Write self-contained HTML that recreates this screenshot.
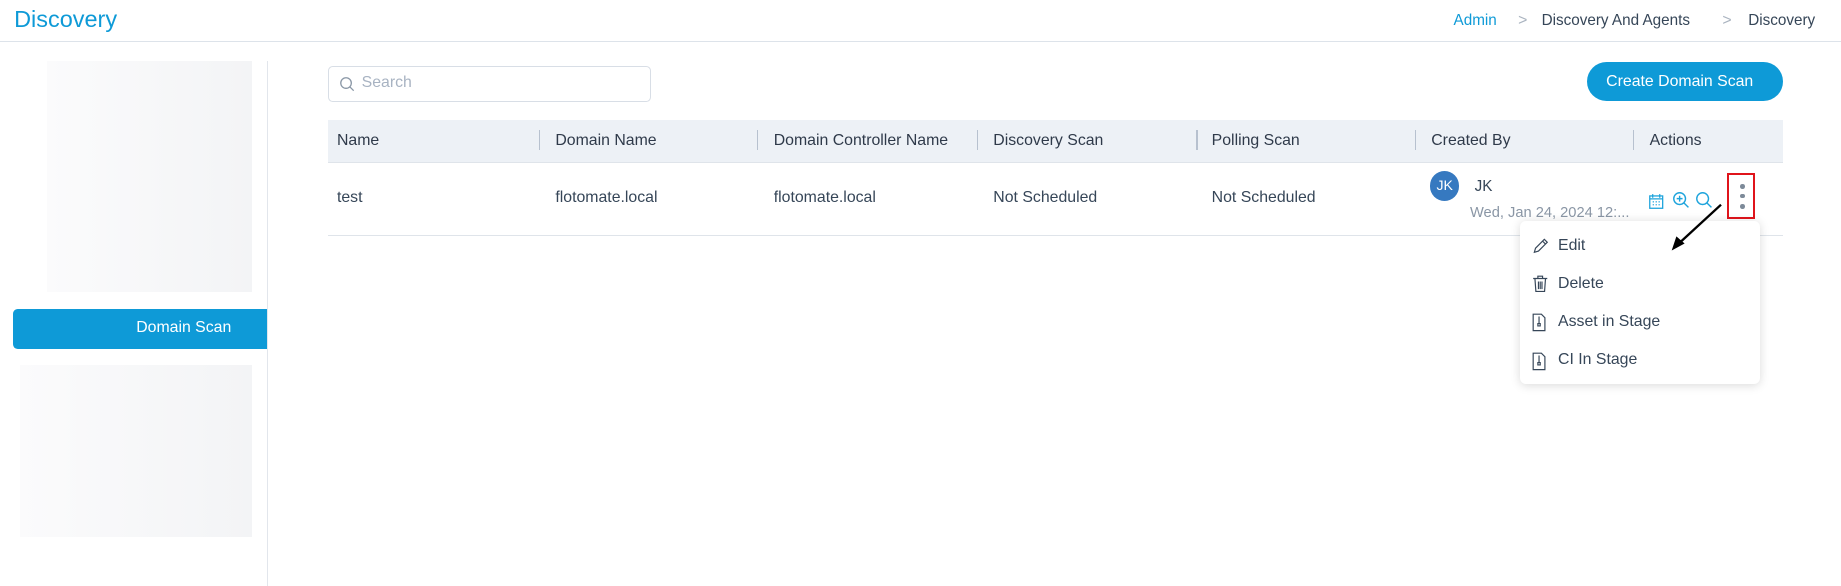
<!DOCTYPE html>
<html><head><meta charset="utf-8"><style>
html{zoom:1.17411}
body{margin:0;width:1568px;height:499px;overflow:hidden;background:#fff;font-family:"Liberation Sans",sans-serif;color:#364658;position:relative;font-size:13.5px}
.a{position:absolute;white-space:nowrap}
.blue{color:#0e9ad7}
.th{position:absolute;top:112px;font-size:13.5px;color:#2f3a4a}
.sep{position:absolute;top:111px;width:1px;height:17px;background:#b7c1cf}
.td{position:absolute;top:161px;font-size:13.5px;color:#364658}
.mi{position:absolute;left:1327px;font-size:13.5px;color:#364658}
</style></head><body>
<div class="a blue" style="left:12px;top:5px;font-size:20px">Discovery</div>
<div class="a" style="left:0;top:35px;width:1568px;height:1px;background:#dde3ea"></div>
<div class="a blue" style="left:1238px;top:10px;font-size:13px">Admin</div>
<div class="a" style="left:1293px;top:10px;color:#aab4c0">&gt;</div>
<div class="a" style="left:1313px;top:10px;font-size:13px">Discovery And Agents</div>
<div class="a" style="left:1467px;top:10px;color:#aab4c0">&gt;</div>
<div class="a" style="left:1489px;top:10px;font-size:13px">Discovery</div>

<div class="a" style="left:40px;top:52px;width:175px;height:197px;background:linear-gradient(90deg,#fbfbfc,#f3f4f6)"></div>
<div class="a" style="left:11px;top:263px;width:216px;height:34px;background:#0e9ad7;border-radius:4px 0 0 4px"></div>
<div class="a" style="left:116px;top:272px;color:#fff">Domain Scan</div>
<div class="a" style="left:17px;top:311px;width:198px;height:146px;background:linear-gradient(90deg,#fbfbfc,#f3f4f6)"></div>
<div class="a" style="left:227px;top:52px;width:1px;height:447px;background:#e2e6ec"></div>

<div class="a" style="left:279px;top:56px;width:274px;height:29px;border:1px solid #d8dee6;border-radius:4px"></div>
<svg class="a" style="left:289px;top:65px" width="14" height="14" viewBox="0 0 14 14"><circle cx="6" cy="6" r="4.5" fill="none" stroke="#8a97a6" stroke-width="1.1"/><path d="M9.3 9.3L12.5 12.5" stroke="#8a97a6" stroke-width="1.1"/></svg>
<div class="a" style="left:308px;top:63px;color:#a8b3c2">Search</div>

<div class="a" style="left:1352px;top:53px;width:167px;height:33px;background:#0e9ad7;border-radius:17px"></div>
<div class="a" style="left:1368px;top:62px;color:#fff;font-size:13.5px">Create Domain Scan</div>

<div class="a" style="left:279px;top:102px;width:1240px;height:36px;background:#edf1f6;border-bottom:1px solid #dfe4ea"></div>
<div class="th" style="left:287px">Name</div>
<div class="sep" style="left:459px"></div><div class="th" style="left:473px">Domain Name</div>
<div class="sep" style="left:645px"></div><div class="th" style="left:659px">Domain Controller Name</div>
<div class="sep" style="left:832px"></div><div class="th" style="left:846px">Discovery Scan</div>
<div class="sep" style="left:1019px"></div><div class="th" style="left:1032px">Polling Scan</div>
<div class="sep" style="left:1205px"></div><div class="th" style="left:1219px">Created By</div>
<div class="sep" style="left:1391px"></div><div class="th" style="left:1405px">Actions</div>

<div class="td" style="left:287px">test</div>
<div class="td" style="left:473px">flotomate.local</div>
<div class="td" style="left:659px">flotomate.local</div>
<div class="td" style="left:846px">Not Scheduled</div>
<div class="td" style="left:1032px">Not Scheduled</div>
<div class="a" style="left:1218px;top:146px;width:25px;height:25px;border-radius:50%;background:#3679c0;color:#fff;font-size:12px;text-align:center;line-height:25px">JK</div>
<div class="a" style="left:1256px;top:152px;font-size:13px">JK</div>
<div class="a" style="left:1252px;top:175px;font-size:12.5px;color:#8a96a5">Wed, Jan 24, 2024 12:...</div>
<div class="a" style="left:279px;top:200px;width:1240px;height:1px;background:#dfe4ea"></div>

<svg class="a" style="left:1404px;top:164px" width="14" height="14" viewBox="0 0 14 14" fill="none" stroke="#1ea4dc" stroke-width="1.1"><rect x="1.5" y="2.5" width="11" height="10.5"/><path d="M1.5 5h11M4 1v3M10 1v3M4 7.5h1M6.5 7.5h1M9 7.5h1M4 10h1M6.5 10h1M9 10h1"/></svg>
<svg class="a" style="left:1424px;top:163px" width="15" height="15" viewBox="0 0 15 15" fill="none" stroke="#1ea4dc" stroke-width="1.2"><circle cx="6.5" cy="6.5" r="5"/><path d="M10 10l4 4M6.5 4v5M4 6.5h5"/></svg>
<svg class="a" style="left:1444px;top:163px" width="15" height="15" viewBox="0 0 15 15" fill="none" stroke="#1ea4dc" stroke-width="1.2"><circle cx="6.5" cy="6.5" r="5"/><path d="M10 10l4 4"/></svg>
<div class="a" style="left:1471px;top:147px;width:20px;height:36px;border:2px solid #e0141b"></div>
<div class="a" style="left:1482px;top:157px;width:4px;height:4px;border-radius:50%;background:#7d8a99"></div>
<div class="a" style="left:1482px;top:165px;width:4px;height:4px;border-radius:50%;background:#7d8a99"></div>
<div class="a" style="left:1482px;top:174px;width:4px;height:4px;border-radius:50%;background:#7d8a99"></div>

<div class="a" style="left:1295px;top:188px;width:204px;height:139px;background:#fff;border-radius:5px;box-shadow:0 1px 8px rgba(0,0,0,.15)"></div>
<svg class="a" style="left:1420px;top:170px;overflow:visible" width="50" height="46"><path d="M46 4L8 39" stroke="#000" stroke-width="2"/><path d="M4 43L8 31L15 37Z" fill="#000"/></svg>
<svg class="a" style="left:1305px;top:202px" width="15" height="15" viewBox="0 0 15 15" fill="none" stroke="#364658" stroke-width="1"><path d="M2 13l1-3.5L10.5 2l2.5 2.5L5.5 12Z M9 3.5l2.5 2.5"/></svg>
<div class="mi" style="top:202px">Edit</div>
<svg class="a" style="left:1305px;top:234px" width="14" height="15" viewBox="0 0 14 15" fill="none" stroke="#364658" stroke-width="1"><path d="M1 3h12M5 3V1h4v2M2.5 3l.8 11h7.4l.8-11M5.5 5.5v6.5M7 5.5v6.5M8.5 5.5v6.5"/></svg>
<div class="mi" style="top:234px">Delete</div>
<svg class="a" style="left:1305px;top:267px" width="12" height="16" viewBox="0 0 12 16" fill="none" stroke="#364658" stroke-width="1"><path d="M1 1h7l3 3v11H1Z M6 3v6M5 9h2v2H5z"/></svg>
<div class="mi" style="top:267px">Asset in Stage</div>
<svg class="a" style="left:1305px;top:300px" width="12" height="16" viewBox="0 0 12 16" fill="none" stroke="#364658" stroke-width="1"><path d="M1 1h7l3 3v11H1Z M6 3v6M5 9h2v2H5z"/></svg>
<div class="mi" style="top:299px">CI In Stage</div>
</body></html>
